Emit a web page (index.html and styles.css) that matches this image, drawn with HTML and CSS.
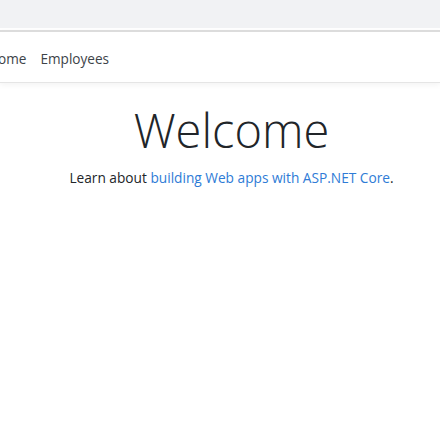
FILE: index.html
```html
<!DOCTYPE html>
<html>
<head>
<meta charset="utf-8">
<link rel="stylesheet" href="styles.css">
</head>
<body>
<div class="topbar"></div>
<header class="navbar">
  <nav class="nav">
    <a class="nav-link first" href="#">Home</a>
    <a class="nav-link" href="#">Employees</a>
  </nav>
</header>
<main class="main">
  <div class="text-center">
    <h1 class="display">Welcome</h1>
    <p class="lead-text">Learn about <a class="link" href="#">building Web apps with ASP.NET Core</a>.</p>
  </div>
</main>
</body>
</html>
```
FILE: styles.css
```css
html, body {
  margin: 0;
  padding: 0;
  background: #ffffff;
  font-family: "Open Sans", "Liberation Sans", sans-serif;
  color: #212529;
  overflow: hidden;
}
.topbar {
  height: 28px;
  background: #f1f2f4;
  border-bottom: 2px solid #ffffff;
}
.navbar {
  border-top: 2px solid #dcdcdc;
  border-bottom: 1px solid #e5e5e5;
  box-shadow: 0 2px 6px rgba(0,0,0,0.05);
  height: 50px;
  display: flex;
  align-items: center;
  background: #fff;
}
.nav {
  display: flex;
  gap: 14px;
  margin-left: -12px;
  padding-top: 2px;
}
.nav-link {
  font-size: 13.6px;
  color: #3d4348;
  text-decoration: none;
}
.main {
  padding-left: 23px;
}
.text-center {
  text-align: center;
}
.display {
  font-weight: 300;
  font-size: 47px;
  line-height: 1.2;
  margin: 19px 0 10px;
  color: #212529;
}
.lead-text {
  font-size: 13.7px;
  margin: 0;
}
.link {
  color: #2e7bd6;
  text-decoration: none;
}
```
